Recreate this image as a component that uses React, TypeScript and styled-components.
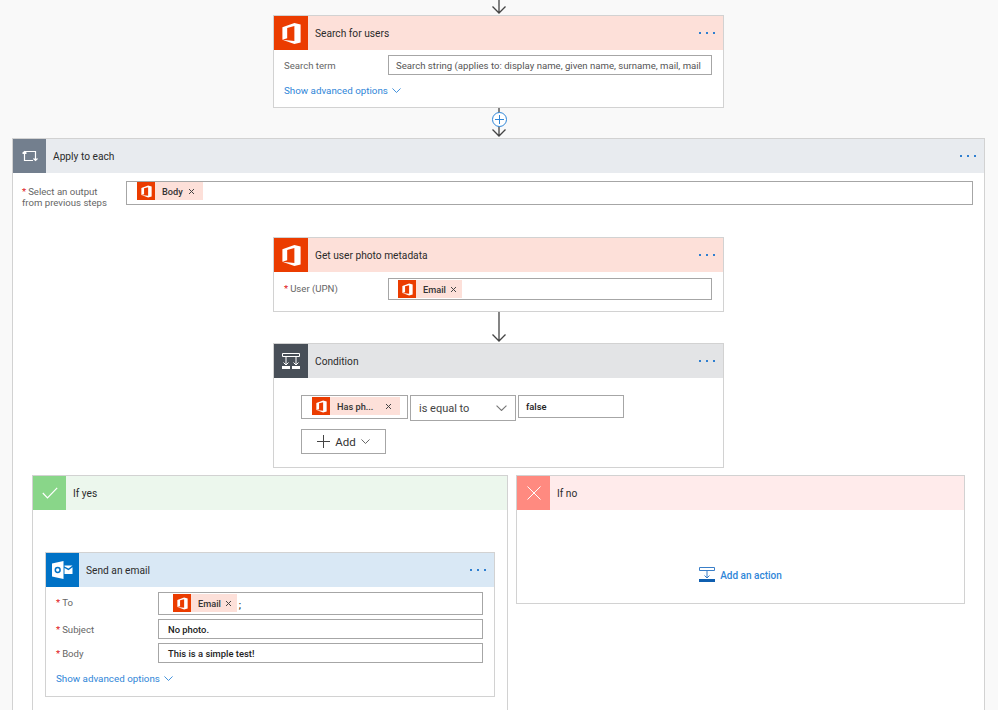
import styled, { createGlobalStyle } from "styled-components";

const Global = createGlobalStyle`
  html, body { margin: 0; padding: 0; background: #f9f9f9; }
  * { box-sizing: border-box; }
`;

const Page = styled.div`
  width: 998px;
  height: 710px;
  overflow: hidden;
  background: #f9f9f9;
  font-family: Roboto, "Open Sans", sans-serif;
  font-size: 10px;
  color: #333;
  display: flex;
  flex-direction: column;
  align-items: center;
  padding-right: 1px;
`;

const ConnectorWrap = styled.div<{ $h: number }>`
  height: ${(p) => p.$h}px;
  width: 20px;
  flex: none;
  position: relative;
`;

const Plus = styled.div`
  position: absolute;
  left: 3px;
  top: 4px;
  width: 15px;
  height: 15px;
  border: 1px solid #2f86d8;
  border-radius: 50%;
  background: #fff;
  color: #2f86d8;
  display: flex;
  align-items: center;
  justify-content: center;
`;

const Card = styled.div<{ $w?: string; $h?: number }>`
  width: ${(p) => p.$w ?? "451px"};
  ${(p) => (p.$h ? `height: ${p.$h}px;` : "")}
  flex: none;
  background: #fff;
  border: 1px solid #d2d2d2;
`;

const Header = styled.div<{ $bg: string }>`
  height: 34px;
  background: ${(p) => p.$bg};
  display: flex;
  align-items: center;
`;

const IconBox = styled.div<{ $bg: string; $w: number }>`
  width: ${(p) => p.$w}px;
  height: 34px;
  flex: none;
  background: ${(p) => p.$bg};
  display: flex;
  align-items: center;
  justify-content: center;
`;

const Title = styled.div`
  margin-left: 7px;
  font-size: 10.2px;
  color: #2b2b2b;
  flex: 1;
`;

const Dots = styled.div`
  display: flex;
  gap: 5px;
  margin-right: 8px;
  & > i {
    width: 2px;
    height: 2px;
    background: #2f7fd0;
    display: block;
  }
`;

const Body = styled.div<{ $pad: string }>`
  padding: ${(p) => p.$pad};
`;

const Row = styled.div<{ $mb?: number }>`
  display: flex;
  align-items: flex-start;
  margin-bottom: ${(p) => p.$mb ?? 0}px;
`;

const Label = styled.div<{ $w: number }>`
  width: ${(p) => p.$w}px;
  flex: none;
  color: #666;
  font-size: 9.6px;
  line-height: 11px;
  padding-top: 5px;
`;

const Star = styled.span`
  color: #e02020;
  margin-right: 2px;
`;

const Input = styled.div<{ $h: number; $w?: string; $pl?: number; $top?: number }>`
  height: ${(p) => p.$h}px;
  width: ${(p) => p.$w ?? "auto"};
  flex: ${(p) => (p.$w ? "none" : 1)};
  border: 1px solid #a6a6a6;
  background: #fff;
  display: flex;
  align-items: ${(p) => (p.$top === undefined ? "center" : "flex-start")};
  padding: ${(p) => p.$top ?? 0}px 0 0 ${(p) => p.$pl ?? 7}px;
  font-size: 9.7px;
  white-space: nowrap;
  overflow: hidden;
  color: #222;
`;

const Value = styled.span<{ $strong?: boolean; $muted?: boolean }>`
  font-weight: ${(p) => (p.$strong ? 500 : 400)};
  font-size: ${(p) => (p.$strong ? "9.4px" : "9.6px")};
  color: ${(p) => (p.$muted ? "#555" : "#222")};
`;

const Semicolon = styled.span`
  margin: 5px 0 0 2px;
  font-weight: 500;
`;

const Token = styled.div<{ $w?: number; $ml?: number }>`
  height: 18px;
  ${(p) => (p.$w ? `width: ${p.$w}px;` : "")}
  margin-left: ${(p) => p.$ml ?? 0}px;
  background: #fde0d9;
  display: flex;
  align-items: center;
  font-size: 9.2px;
  font-weight: 500;
  color: #333;
  flex: none;
`;

const TokenIcon = styled.div`
  width: 18px;
  height: 18px;
  background: #eb3c00;
  display: flex;
  align-items: center;
  justify-content: center;
  margin-right: 7px;
`;

const TokenClose = styled.span<{ $ml: number; $mr: number }>`
  margin-left: ${(p) => p.$ml}px;
  margin-right: ${(p) => p.$mr}px;
  display: flex;
`;

const Advanced = styled.div<{ $mt: number }>`
  margin-top: ${(p) => p.$mt}px;
  color: #2f86d8;
  font-size: 9.8px;
  display: flex;
  align-items: center;
  gap: 4px;
`;

const ConditionRow = styled.div`
  display: flex;
  align-items: flex-start;
  gap: 2px;
`;

const AddButton = styled.div`
  width: 85px;
  height: 25px;
  margin-top: 8px;
  border: 1px solid #a6a6a6;
  display: flex;
  align-items: center;
  justify-content: center;
  gap: 5px;
  font-size: 11.5px;
  color: #333;
`;

const Select = styled.div`
  width: 106px;
  height: 26px;
  border: 1px solid #a6a6a6;
  display: flex;
  align-items: center;
  justify-content: space-between;
  padding: 0 8px;
  font-size: 11px;
  color: #444;
`;

const Branches = styled.div`
  width: 100%;
  display: grid;
  grid-template-columns: 476px 449px;
  gap: 8px;
  padding-left: 19px;
  margin-top: 7px;
`;

const BranchBody = styled.div`
  display: flex;
  flex-direction: column;
  align-items: center;
  padding-top: 42px;
`;

const AddAction = styled.div`
  height: 94px;
  display: flex;
  align-items: center;
  justify-content: center;
  gap: 5px;
  padding-top: 36px;
  color: #2f86d8;
  font-size: 10px;
  font-weight: 500;
`;

const ApplyBody = styled.div`
  display: flex;
  flex-direction: column;
  align-items: center;
`;

const ApplyField = styled.div`
  width: 100%;
  display: flex;
  padding: 8px 11px 0 9px;
  height: 64px;
`;

const Arrow = ({ h }: { h: number }) => (
  <svg width="20" height={h} viewBox={`0 0 20 ${h}`} style={{ display: "block" }}>
    <path
      d={`M10 0 V${h - 1} M3.5 ${h - 7.5} L10 ${h - 1} L16.5 ${h - 7.5}`}
      fill="none"
      stroke="#444"
      strokeWidth="1.3"
    />
  </svg>
);

const OfficeIcon = ({ size }: { size: number }) => (
  <svg width={size} height={size} viewBox="0 0 24 24">
    <path
      fillRule="evenodd"
      fill="#fff"
      d="M2.5 5.6 15 1 21.5 2.7 V21.3 L15 23 2.5 18.4 Z M15 4.2 L7.5 6.2 V16.9 L2.5 18.4 15 19.8 Z"
    />
  </svg>
);

const Caret = ({ size = 9, color = "#2f86d8" }: { size?: number; color?: string }) => (
  <svg width={size} height={size * 0.6} viewBox="0 0 10 6">
    <path d="M.5.5 5 5 9.5.5" fill="none" stroke={color} strokeWidth="1" />
  </svg>
);

const Close = () => (
  <svg width="7" height="7" viewBox="0 0 7 7">
    <path d="M1 1 6 6 M6 1 1 6" stroke="#444" strokeWidth="1" />
  </svg>
);

const ActionHeader = ({
  bg,
  iconBg,
  icon,
  title,
  iconW = 33,
  dots = true,
}: {
  bg: string;
  iconBg: string;
  icon: React.ReactNode;
  title: string;
  iconW?: number;
  dots?: boolean;
}) => (
  <Header $bg={bg}>
    <IconBox $bg={iconBg} $w={iconW}>
      {icon}
    </IconBox>
    <Title>{title}</Title>
    {dots && (
      <Dots>
        <i />
        <i />
        <i />
      </Dots>
    )}
  </Header>
);

const OfficeToken = ({
  text,
  w,
  ml,
  closeMl = 4,
  closeMr = 5,
}: {
  text: string;
  w?: number;
  ml?: number;
  closeMl?: number;
  closeMr?: number;
}) => (
  <Token $w={w} $ml={ml}>
    <TokenIcon>
      <OfficeIcon size={13} />
    </TokenIcon>
    {text}
    <TokenClose $ml={closeMl} $mr={closeMr}>
      <Close />
    </TokenClose>
  </Token>
);

const OFFICE_BG = "#fde0d9";
const OFFICE = "#eb3c00";

export default function App() {
  return (
    <Page>
      <Global />
      <ConnectorWrap $h={15}>
        <Arrow h={14} />
      </ConnectorWrap>

      <Card $h={93}>
        <ActionHeader bg={OFFICE_BG} iconBg={OFFICE} iconW={34} icon={<OfficeIcon size={23} />} title="Search for users" />
        <Body $pad="5px 11px 0 10px">
          <Row>
            <Label $w={104}>Search term</Label>
            <Input $h={20}>
              <Value $muted>Search string (applies to: display name, given name, surname, mail, mail</Value>
            </Input>
          </Row>
          <Advanced $mt={10}>
            Show advanced options <Caret />
          </Advanced>
        </Body>
      </Card>

      <ConnectorWrap $h={30}>
        <Arrow h={29} />
        <Plus>
          <svg width="9" height="9" viewBox="0 0 9 9">
            <path d="M4.5 0 V9 M0 4.5 H9" stroke="#2f86d8" strokeWidth="1" />
          </svg>
        </Plus>
      </ConnectorWrap>

      <Card $w="973px" $h={600}>
        <ActionHeader
          bg="#e8ebef"
          iconBg="#737f8e"
          title="Apply to each"
          icon={
            <svg width="16" height="12" viewBox="0 0 16 12">
              <path
                d="M0.5 3.5 2.5 1.5 4.5 3.5 M2.5 1.5 V10.5 H11 M2.5 1.5 H13.5 V10.5 M11.5 8.5 13.5 10.5 15.5 8.5"
                fill="none"
                stroke="#fff"
                strokeWidth="1.2"
              />
            </svg>
          }
        />
        <ApplyBody>
          <ApplyField>
            <Label $w={104}>
              <Star>*</Star>Select an output
              <br />
              from previous steps
            </Label>
            <Input $h={24} $pl={10} $top={0}>
              <OfficeToken text="Body" closeMl={5} closeMr={8} />
            </Input>
          </ApplyField>

          <Card $h={75}>
            <ActionHeader
              bg={OFFICE_BG}
              iconBg={OFFICE}
              iconW={34}
              icon={<OfficeIcon size={23} />}
              title="Get user photo metadata"
            />
            <Body $pad="6px 11px 0 10px">
              <Row>
                <Label $w={104}>
                  <Star>*</Star>User (UPN)
                </Label>
                <Input $h={22} $top={1}>
                  <OfficeToken text="Email" ml={2} />
                </Input>
              </Row>
            </Body>
          </Card>

          <ConnectorWrap $h={31}>
            <Arrow h={30} />
          </ConnectorWrap>

          <Card $h={125}>
            <ActionHeader
              bg="#e3e4e6"
              iconBg="#484f58"
              iconW={34}
              title="Condition"
              icon={
                <svg width="20" height="18" viewBox="0 0 20 18">
                  <path
                    d="M1.5 1.5 H18.5 V4.5 H1.5 Z M5 4.5 V13 M15 4.5 V13 M2.5 10.5 5 13 7.5 10.5 M12.5 10.5 15 13 17.5 10.5"
                    fill="none"
                    stroke="#fff"
                    strokeWidth="1"
                  />
                  <path d="M1 14 H9 V17 H1 Z M11 14 H19 V17 H11 Z" fill="#fff" />
                </svg>
              }
            />
            <Body $pad="17px 0 0 27px">
              <ConditionRow>
                <Input $h={24} $w="107px" $pl={10} $top={1}>
                  <OfficeToken text="Has ph..." w={88} closeMl={12} closeMr={5} />
                </Input>
                <Select>
                  is equal to <Caret size={11} color="#777" />
                </Select>
                <Input $h={23} $w="106px">
                  <Value $strong>false</Value>
                </Input>
              </ConditionRow>
              <AddButton>
                <svg width="13" height="13" viewBox="0 0 13 13">
                  <path d="M6.5 0 V13 M0 6.5 H13" stroke="#444" strokeWidth="1" />
                </svg>
                Add <Caret color="#555" />
              </AddButton>
            </Body>
          </Card>

          <Branches>
            <Card $w="476px" $h={260}>
              <ActionHeader
                bg="#ecf7ed"
                iconBg="#89d689"
                title="If yes"
                dots={false}
                icon={
                  <svg width="16" height="12" viewBox="0 0 16 12">
                    <path d="M.8 6 5.5 11 15.2 .8" fill="none" stroke="#fff" strokeWidth="1.2" />
                  </svg>
                }
              />
              <BranchBody>
                <Card $w="450px" $h={145}>
                  <ActionHeader
                    bg="#d9e8f5"
                    iconBg="#0072c6"
                    title="Send an email"
                    icon={
                      <svg width="21" height="18" viewBox="0 0 21 18">
                        <path d="M0 2.5 11.5 0 V18 L0 15.5 Z" fill="#fff" />
                        <circle cx="5.7" cy="9" r="2.4" fill="none" stroke="#0072c6" strokeWidth="1.5" />
                        <path d="M12.5 4.5 H20.5 L16.5 7.5 12.5 5.5 Z M12.5 7 16.5 9.2 20.5 6.2 V13 H12.5 Z" fill="#fff" />
                      </svg>
                    }
                  />
                  <Body $pad="5px 11px 0 10px">
                    <Row $mb={4}>
                      <Label $w={102}>
                        <Star>*</Star>To
                      </Label>
                      <Input $h={23} $pl={14} $top={1}>
                        <OfficeToken text="Email" />
                        <Semicolon>;</Semicolon>
                      </Input>
                    </Row>
                    <Row $mb={4}>
                      <Label $w={102}>
                        <Star>*</Star>Subject
                      </Label>
                      <Input $h={20} $pl={9}>
                        <Value $strong>No photo.</Value>
                      </Input>
                    </Row>
                    <Row>
                      <Label $w={102}>
                        <Star>*</Star>Body
                      </Label>
                      <Input $h={20} $pl={9}>
                        <Value $strong>This is a simple test!</Value>
                      </Input>
                    </Row>
                    <Advanced $mt={10}>
                      Show advanced options <Caret />
                    </Advanced>
                  </Body>
                </Card>
              </BranchBody>
            </Card>

            <Card $w="449px" $h={129}>
              <ActionHeader
                bg="#ffebeb"
                iconBg="#ff8a80"
                title="If no"
                dots={false}
                icon={
                  <svg width="14" height="14" viewBox="0 0 14 14">
                    <path d="M.5.5 13.5 13.5 M13.5.5 .5 13.5" stroke="#fff" strokeWidth="1" />
                  </svg>
                }
              />
              <AddAction>
                <svg width="16" height="16" viewBox="0 0 16 16">
                  <path d="M.5.5 H15.5 V3.5 H.5 Z M8 3.5 V11 M5.5 8.5 8 11 10.5 8.5" fill="none" stroke="#3a7fc8" strokeWidth="1" />
                  <path d="M0 12 H16 V15 H0 Z" fill="#0f5fb0" />
                </svg>
                Add an action
              </AddAction>
            </Card>
          </Branches>
        </ApplyBody>
      </Card>
    </Page>
  );
}
